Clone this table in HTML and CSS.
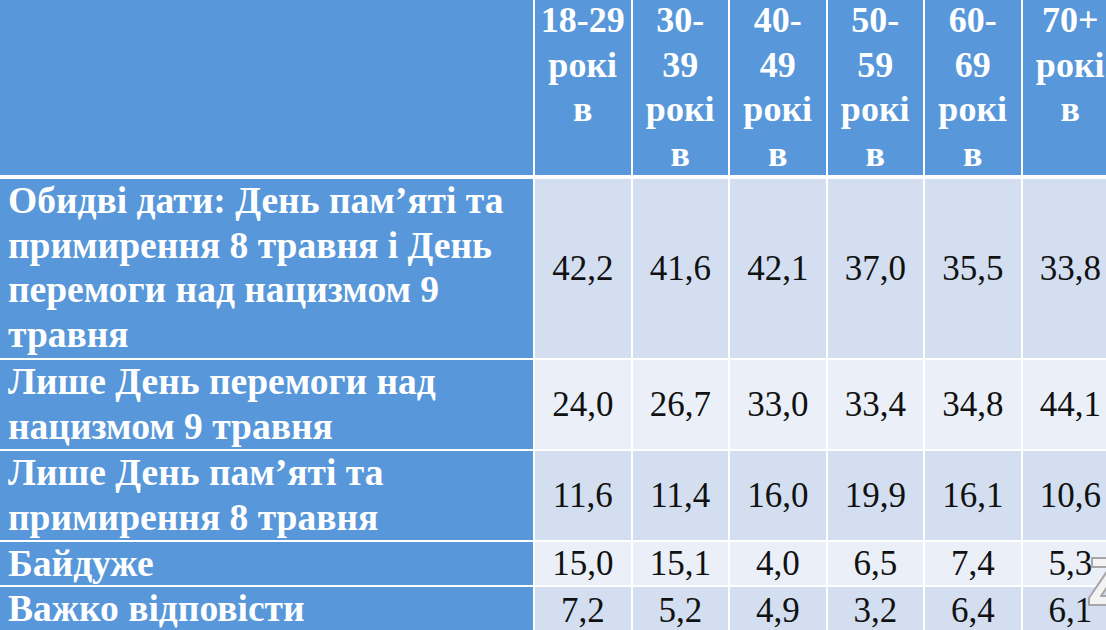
FILE: index.html
```html
<!DOCTYPE html>
<html lang="uk">
<head>
<meta charset="utf-8">
<title>Таблиця</title>
<link rel="stylesheet" href="styles.css">
</head>
<body>
<div class="slide">
  <div class="grid">
    <div class="cell head corner"></div>
    <div class="cell head"><div class="htext">18-29<br>рокі<br>в</div></div>
    <div class="cell head"><div class="htext">30-<br>39<br>рокі<br>в</div></div>
    <div class="cell head"><div class="htext">40-<br>49<br>рокі<br>в</div></div>
    <div class="cell head"><div class="htext">50-<br>59<br>рокі<br>в</div></div>
    <div class="cell head"><div class="htext">60-<br>69<br>рокі<br>в</div></div>
    <div class="cell head"><div class="htext">70+<br>рокі<br>в</div></div>

    <div class="cell label">Обидві дати: День пам’яті та<br>примирення 8 травня і День<br>перемоги над нацизмом 9<br>травня</div>
    <div class="cell num band-a">42,2</div>
    <div class="cell num band-a">41,6</div>
    <div class="cell num band-a">42,1</div>
    <div class="cell num band-a">37,0</div>
    <div class="cell num band-a">35,5</div>
    <div class="cell num band-a">33,8</div>

    <div class="cell label">Лише День перемоги над<br>нацизмом 9 травня</div>
    <div class="cell num band-b">24,0</div>
    <div class="cell num band-b">26,7</div>
    <div class="cell num band-b">33,0</div>
    <div class="cell num band-b">33,4</div>
    <div class="cell num band-b">34,8</div>
    <div class="cell num band-b">44,1</div>

    <div class="cell label">Лише День пам’яті та<br>примирення 8 травня</div>
    <div class="cell num band-a">11,6</div>
    <div class="cell num band-a">11,4</div>
    <div class="cell num band-a">16,0</div>
    <div class="cell num band-a">19,9</div>
    <div class="cell num band-a">16,1</div>
    <div class="cell num band-a">10,6</div>

    <div class="cell label">Байдуже</div>
    <div class="cell num band-b">15,0</div>
    <div class="cell num band-b">15,1</div>
    <div class="cell num band-b">4,0</div>
    <div class="cell num band-b">6,5</div>
    <div class="cell num band-b">7,4</div>
    <div class="cell num band-b">5,3</div>

    <div class="cell label">Важко відповісти</div>
    <div class="cell num band-a last">7,2</div>
    <div class="cell num band-a last">5,2</div>
    <div class="cell num band-a last">4,9</div>
    <div class="cell num band-a last">3,2</div>
    <div class="cell num band-a last">6,4</div>
    <div class="cell num band-a last">6,1</div>
  </div>
  <svg class="logo" width="40" height="66" viewBox="0 0 40 66" aria-hidden="true">
    <polygon points="8,8 38,8 38,15 17,46 38,46 38,55 5,55 5,48 26,17 8,17" fill="#f3f3f3" stroke="#a6a6a6" stroke-width="2" stroke-linejoin="round"/>
  </svg>
</div>
</body>
</html>
```

FILE: styles.css
```css
html, body {
  margin: 0;
  padding: 0;
  background: #ffffff;
}

.slide {
  position: relative;
  width: 1106px;
  height: 630px;
  overflow: hidden;
  background: #ffffff;
}

.grid {
  display: grid;
  grid-template-columns: 533px repeat(6, 95.5px);
  grid-template-rows: 177px 179px 89px 89px 43px 60px;
  column-gap: 2px;
  row-gap: 2px;
  width: 1120px;
}

.cell {
  overflow: hidden;
}

.head {
  background: #5797da;
  margin-bottom: 2px;
  color: #ffffff;
  font-family: "Liberation Serif", "DejaVu Serif", serif;
  font-weight: bold;
  font-size: 36px;
  line-height: 44.5px;
  text-align: center;
}

.htext {
  margin-top: -2px;
}

.label {
  background: #5797da;
  color: #ffffff;
  font-family: "Liberation Serif", "DejaVu Serif", serif;
  font-weight: bold;
  font-size: 37.5px;
  line-height: 44.5px;
  padding-left: 8px;
  white-space: nowrap;
  display: flex;
  align-items: flex-start;
}

.num {
  color: #111111;
  font-family: "Liberation Serif", "DejaVu Serif", serif;
  font-size: 35px;
  display: flex;
  align-items: center;
  justify-content: center;
  white-space: nowrap;
}

.num.last {
  align-items: flex-start;
  padding-top: 4px;
}

.band-a {
  background: #d3dff0;
}

.band-b {
  background: #eaeff8;
}

.logo {
  position: absolute;
  left: 1084px;
  top: 550px;
}
```
